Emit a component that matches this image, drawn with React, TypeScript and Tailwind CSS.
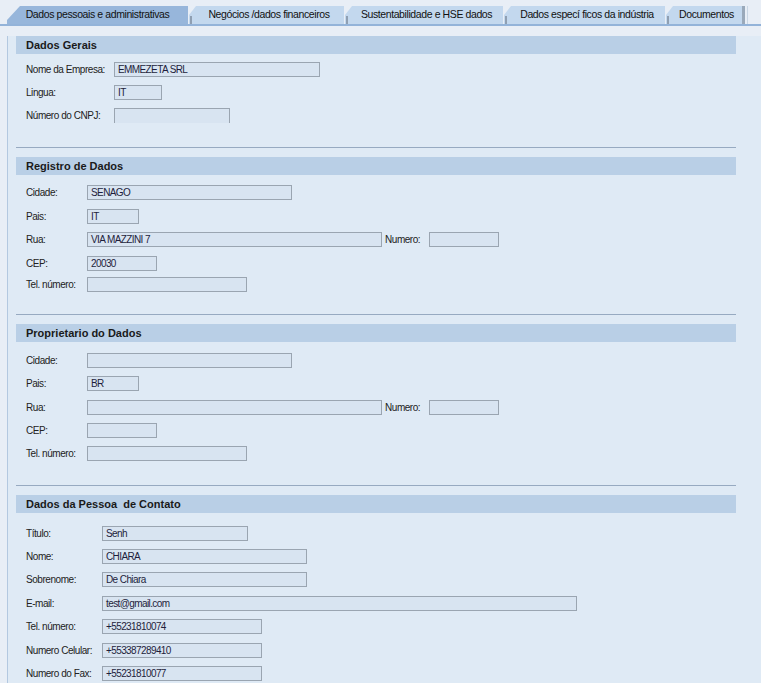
import React from "react";

type Field = {
  label: string;
  value?: string;
  w: string;
  h: string;
  extra?: { label: string; w: string };
  noBottom?: boolean;
};

const font = { fontFamily: '"Liberation Sans", Arial, sans-serif' };

const Input = ({ value, w, noBottom }: { value?: string; w: string; noBottom?: boolean }) => (
  <div
    className={`${w} h-[15px] shrink-0 overflow-hidden whitespace-nowrap border border-[#9aa5b1] bg-[#d8e4f1] pl-[3px] text-[10px] leading-[13px] tracking-[-0.6px] text-[#1e1e3c] ${
      noBottom ? "border-b-0" : ""
    }`}
  >
    {value}
  </div>
);

const Section = ({
  title,
  labelW,
  pt,
  rows,
  first,
}: {
  title: string;
  labelW: string;
  pt: string;
  rows: Field[];
  first?: boolean;
}) => (
  <div>
    {!first && <div className="mr-[25px] ml-[8px] h-px bg-[#97aac1]" />}
    <div
      className={`${first ? "mt-[10px]" : "mt-[9px]"} mr-[25px] ml-[8px] flex h-[18px] items-center bg-[#b9cfe6] pl-[10px] text-[11px] font-bold whitespace-pre text-[#1a1a1a]`}
    >
      {title}
    </div>
    <div className={`${pt} pl-[18px]`}>
      {rows.map((r) => (
        <div key={r.label} className={`${r.h} flex items-start`}>
          <div className={`${labelW} shrink-0 whitespace-nowrap text-[10px] leading-[15px] tracking-[-0.45px] text-[#222]`}>
            {r.label}
          </div>
          <Input value={r.value} w={r.w} noBottom={r.noBottom} />
          {r.extra && (
            <>
              <div className="w-[47px] shrink-0 whitespace-nowrap pl-[3px] text-[10px] leading-[15px] tracking-[-0.45px] text-[#222]">
                {r.extra.label}
              </div>
              <Input w={r.extra.w} />
            </>
          )}
        </div>
      ))}
    </div>
  </div>
);

const tabs = [
  { label: "Dados pessoais e administrativas", w: "w-[181px]", active: true },
  { label: "Negócios /dados financeiros", w: "w-[156px]" },
  { label: "Sustentabilidade e HSE dados", w: "w-[159px]" },
  { label: "Dados especí ficos da indústria", w: "w-[162px]" },
  { label: "Documentos", w: "w-[77px]" },
];

export default function App() {
  return (
    <div className="h-[683px] w-[761px] overflow-hidden bg-[#e8eef6]" style={font}>
      <div className="flex h-[24px] items-end pl-[7px]">
        {tabs.map((t) =>
          t.active ? (
            <div
              key={t.label}
              className={`${t.w} flex h-[18px] shrink-0 items-center justify-center whitespace-nowrap bg-[#97b6db] text-[10.5px] tracking-[-0.4px] text-[#111]`}
              style={{ clipPath: "polygon(13px 0, 100% 0, 100% 100%, 0 100%, 0 14px)" }}
            >
              {t.label}
            </div>
          ) : (
            <div key={t.label} className={`${t.w} relative flex h-[18px] shrink-0 items-center justify-center`}>
              <div
                className="absolute inset-0 left-[1px] bg-[#c3d8ee]"
                style={{ clipPath: "polygon(7px 0, 100% 0, 100% 100%, 0 100%, 0 9px)" }}
              />
              <div className="absolute bottom-0 left-[2px] h-[8px] w-[2px] bg-[#8f9fb2]" />
              <span className="relative whitespace-nowrap pl-[6px] text-[10.5px] tracking-[-0.4px] text-[#111]">{t.label}</span>
            </div>
          )
        )}
        <div className="h-[18px] w-[3px] shrink-0 bg-[#9aa9ba]" />
        <div className="ml-[2px] h-[18px] w-[1px] shrink-0 bg-[#c9d6e4]" />
      </div>
      <div className="h-[2px] bg-[#93b3d9]" />
      <div className="ml-[7px] h-[657px] border-l border-[#b3c8e0] bg-[#dfeaf5]">
        <Section
          first
          title="Dados Gerais"
          labelW="w-[88px]"
          pt="pt-[8px]"
          rows={[
            { label: "Nome da Empresa:", value: "EMMEZETA SRL", w: "w-[206px]", h: "h-[23px]" },
            { label: "Lingua:", value: "IT", w: "w-[48px]", h: "h-[23px]" },
            { label: "Número do CNPJ:", w: "w-[116px]", h: "h-[39px]", noBottom: true },
          ]}
        />
        <Section
          title="Registro de Dados"
          labelW="w-[61px]"
          pt="pt-[10px]"
          rows={[
            { label: "Cidade:", value: "SENAGO", w: "w-[205px]", h: "h-[24px]" },
            { label: "Pais:", value: "IT", w: "w-[52px]", h: "h-[23px]" },
            {
              label: "Rua:",
              value: "VIA MAZZINI 7",
              w: "w-[295px]",
              h: "h-[24px]",
              extra: { label: "Numero:", w: "w-[70px]" },
            },
            { label: "CEP:", value: "20030", w: "w-[70px]", h: "h-[21px]" },
            { label: "Tel. número:", w: "w-[160px]", h: "h-[37px]" },
          ]}
        />
        <Section
          title="Proprietario do Dados"
          labelW="w-[61px]"
          pt="pt-[11px]"
          rows={[
            { label: "Cidade:", w: "w-[205px]", h: "h-[23px]" },
            { label: "Pais:", value: "BR", w: "w-[52px]", h: "h-[24px]" },
            { label: "Rua:", w: "w-[295px]", h: "h-[23px]", extra: { label: "Numero:", w: "w-[70px]" } },
            { label: "CEP:", w: "w-[70px]", h: "h-[23px]" },
            { label: "Tel. número:", w: "w-[160px]", h: "h-[39px]" },
          ]}
        />
        <Section
          title="Dados da Pessoa  de Contato"
          labelW="w-[76px]"
          pt="pt-[13px]"
          rows={[
            { label: "Título:", value: "Senh", w: "w-[146px]", h: "h-[23px]" },
            { label: "Nome:", value: "CHIARA", w: "w-[205px]", h: "h-[23px]" },
            { label: "Sobrenome:", value: "De Chiara", w: "w-[205px]", h: "h-[24px]" },
            { label: "E-mail:", value: "test@gmail.com", w: "w-[475px]", h: "h-[23px]" },
            { label: "Tel. número:", value: "+55231810074", w: "w-[160px]", h: "h-[24px]" },
            { label: "Numero Celular:", value: "+553387289410", w: "w-[160px]", h: "h-[23px]" },
            { label: "Numero do Fax:", value: "+55231810077", w: "w-[160px]", h: "h-[23px]" },
          ]}
        />
      </div>
    </div>
  );
}
